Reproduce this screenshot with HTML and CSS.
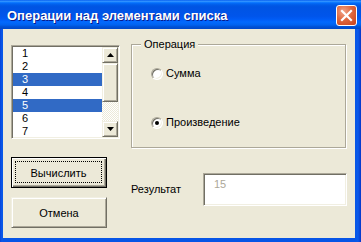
FILE: index.html
```html
<!DOCTYPE html>
<html>
<head>
<meta charset="utf-8">
<link rel="stylesheet" href="styles.css">
</head>
<body>
<div class="window">
  <div class="titlebar">
    <span class="title">Операции над элементами списка</span>
    <span class="close">
      <svg width="19" height="19" viewBox="0 0 19 19"><path d="M5 5 L14 14 M14 5 L5 14" stroke="#fff" stroke-width="2.2" stroke-linecap="square" fill="none"/></svg>
    </span>
  </div>
  <div class="client">
    <div class="col-left">
      <div class="listbox">
        <ul class="items">
          <li>1</li>
          <li>2</li>
          <li class="sel">3</li>
          <li>4</li>
          <li class="sel">5</li>
          <li>6</li>
          <li>7</li>
        </ul>
        <div class="scrollbar">
          <div class="raised sb-btn"><svg width="7" height="4" viewBox="0 0 7 4"><path d="M3.5 0 L7 4 L0 4 Z" fill="#000"/></svg></div>
          <div class="raised sb-thumb"></div>
          <div class="sb-track"></div>
          <div class="raised sb-btn"><svg width="7" height="4" viewBox="0 0 7 4"><path d="M0 0 L7 0 L3.5 4 Z" fill="#000"/></svg></div>
        </div>
      </div>
      <button class="btn btn-default"><span class="focus">Вычислить</span></button>
      <button class="btn raised btn-cancel">Отмена</button>
    </div>
    <div class="col-right">
      <div class="frame">
        <span class="frame-label">Операция</span>
        <div class="radio radio-first"><span class="circle"></span>Сумма</div>
        <div class="radio radio-second"><span class="circle checked"></span>Произведение</div>
      </div>
      <div class="result">
        <span class="result-label">Результат</span>
        <div class="textbox">15</div>
      </div>
    </div>
  </div>
</div>
</body>
</html>
```

FILE: styles.css
```css
html, body {
  margin: 0;
  padding: 0;
  background: #0752E2;
}
body {
  font-family: "Liberation Sans", Arial, sans-serif;
  font-size: 11px;
  color: #000;
}
.window {
  width: 361px;
  height: 242px;
  display: flex;
  flex-direction: column;
  background: linear-gradient(90deg, #0842D9 0px, #0A5AEA 2px, #0755E6 3px, #0755E6 355px, #0A5AEA 358px, #0736C8 361px);
}
.titlebar {
  height: 29px;
  flex: none;
  display: flex;
  align-items: center;
  justify-content: space-between;
  padding: 0 4px 0 7px;
  background: linear-gradient(#0058EE 0%, #3593FF 4%, #288EFF 6%, #127DFF 8%, #036FFC 10%, #0262EE 14%, #0057E5 20%, #0054E3 24%, #0055EB 56%, #005BF5 66%, #026AFE 76%, #0062EF 86%, #0052D6 92%, #0048C8 100%);
}
.title {
  color: #fff;
  font-weight: bold;
  font-size: 13px;
  text-shadow: 1px 1px 0 #0A1A8A;
  padding-top: 1px;
}
.close {
  width: 21px;
  height: 21px;
  box-sizing: border-box;
  border: 1px solid #fff;
  border-radius: 3px;
  margin-top: 2px;
  display: flex;
  align-items: center;
  justify-content: center;
  background: radial-gradient(circle at 35% 30%, #F2A58A 0%, #E0683F 45%, #C9401A 100%);
}
.close svg { display: block; }
.client {
  flex: 1;
  margin: 0 6px 4px 3px;
  background: #ECE9D8;
  display: flex;
  gap: 11px;
  padding: 15px 0 0 8px;
}
.col-left {
  width: 109px;
  display: flex;
  flex-direction: column;
}
.listbox {
  margin-top: 1px;
  height: 94px;
  box-sizing: border-box;
  border: 1px solid;
  border-color: #ACA899 #fff #fff #ACA899;
  box-shadow: inset 1px 1px 0 #716F64, inset -1px -1px 0 #F1EFE2;
  padding: 1px;
  background: #fff;
  display: flex;
}
.items {
  flex: 1;
  list-style: none;
  margin: 0;
  padding: 0;
  overflow: hidden;
}
.items li {
  height: 13px;
  line-height: 13px;
  padding-left: 9px;
}
.items li.sel {
  background: #316AC5;
  color: #fff;
}
.scrollbar {
  width: 16px;
  display: flex;
  flex-direction: column;
}
.raised {
  background: #ECE9D8;
  box-sizing: border-box;
  border: 1px solid;
  border-color: #F1EFE2 #716F64 #716F64 #F1EFE2;
  box-shadow: inset 1px 1px 0 #fff, inset -1px -1px 0 #ACA899;
}
.sb-btn {
  height: 16px;
  display: flex;
  align-items: center;
  justify-content: center;
}
.sb-btn svg { display: block; }
.sb-thumb { height: 39px; }
.sb-track {
  flex: 1;
  background: repeating-conic-gradient(#fff 0 25%, #ECE9D8 0 50%) 0 0 / 2px 2px;
}
.btn {
  width: 96px;
  height: 31px;
  box-sizing: border-box;
  font: inherit;
  color: #000;
  padding: 0;
  margin: 0;
  cursor: default;
}
.btn-default {
  margin-top: 18px;
  background: #ECE9D8;
  border: 1px solid #000;
  box-shadow: inset 1px 1px 0 #fff, inset -1px -1px 0 #716F64, inset -2px -2px 0 #ACA899;
  padding: 3px 4px 4px 3px;
  display: flex;
}
.focus {
  flex: 1;
  border: 1px dotted #000;
  display: flex;
  align-items: center;
  justify-content: center;
  padding-top: 1px;
}
.btn-cancel {
  margin-top: 9px;
  padding-top: 1px;
}
.col-right {
  width: 216px;
  display: flex;
  flex-direction: column;
}
.frame {
  width: 215px;
  height: 104px;
  box-sizing: border-box;
  border: 1px solid #ACA899;
  box-shadow: 1px 1px 0 #fff, inset 1px 1px 0 #fff;
  display: flex;
  flex-direction: column;
  align-items: flex-start;
}
.frame-label {
  margin: -7px 0 0 9px;
  padding: 0 3px;
  line-height: 13px;
  background: #ECE9D8;
}
.radio {
  height: 13px;
  line-height: 13px;
  display: flex;
  align-items: center;
  gap: 3px;
  margin-left: 19px;
}
.radio-first { margin-top: 16px; }
.radio-second { margin-top: 36px; }
.circle {
  width: 12px;
  height: 12px;
  box-sizing: border-box;
  border-radius: 50%;
  border: 1px solid;
  border-color: #ACA899 #fff #fff #ACA899;
  box-shadow: inset 1px 1px 0 #716F64, inset -1px -1px 0 #F1EFE2;
  background: #fff;
  display: flex;
  align-items: center;
  justify-content: center;
}
.circle.checked::after {
  content: "";
  width: 4px;
  height: 4px;
  border-radius: 50%;
  background: #000;
}
.result {
  margin-top: 25px;
  display: flex;
  align-items: center;
}
.result-label {
  width: 72px;
  line-height: 13px;
}
.textbox {
  width: 144px;
  height: 33px;
  box-sizing: border-box;
  border: 1px solid;
  border-color: #ACA899 #fff #fff #ACA899;
  box-shadow: inset 1px 1px 0 #716F64, inset -1px -1px 0 #F1EFE2;
  background: #fff;
  color: #ACA899;
  line-height: 13px;
  padding: 4px 0 0 10px;
}
```
